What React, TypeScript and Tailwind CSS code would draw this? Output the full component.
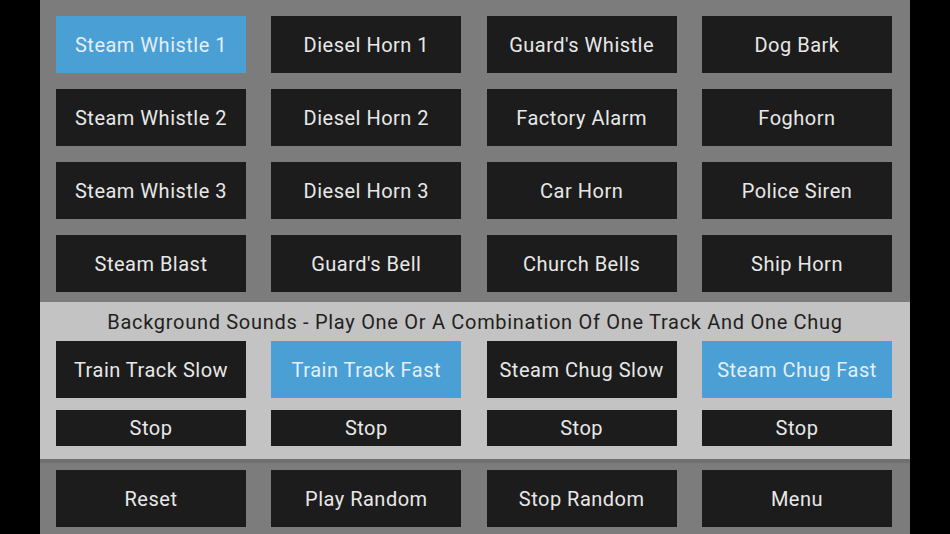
const effects = [
  ["Steam Whistle 1", "Diesel Horn 1", "Guard's Whistle", "Dog Bark"],
  ["Steam Whistle 2", "Diesel Horn 2", "Factory Alarm", "Foghorn"],
  ["Steam Whistle 3", "Diesel Horn 3", "Car Horn", "Police Siren"],
  ["Steam Blast", "Guard's Bell", "Church Bells", "Ship Horn"],
];

const background = [
  { label: "Train Track Slow", on: false },
  { label: "Train Track Fast", on: true },
  { label: "Steam Chug Slow", on: false },
  { label: "Steam Chug Fast", on: true },
];

const controls = ["Reset", "Play Random", "Stop Random", "Menu"];

function Btn({ label, on = false, h = "h-[57px]" }: { label: string; on?: boolean; h?: string }) {
  return (
    <button
      className={`${h} w-[190px] flex items-center justify-center text-[20px] tracking-[0.5px] ${
        on ? "bg-[#4a9fd4] text-[#e4eef5]" : "bg-[#1c1c1c] text-[#e8e8e8]"
      }`}
    >
      {label}
    </button>
  );
}

export default function App() {
  return (
    <div
      className="w-[950px] h-[534px] bg-black flex justify-center overflow-hidden"
      style={{ fontFamily: "Roboto, 'Noto Sans', sans-serif" }}
    >
      <div className="w-[870px] h-full bg-[#7c7c7c] flex flex-col">
        {/* Sound effects */}
        <div className="grid grid-cols-[repeat(4,190px)] gap-x-[25.33px] gap-y-[16px] pl-[16px] pt-[16px]">
          {effects.flat().map((label, i) => (
            <Btn key={label} label={label} on={i === 0} />
          ))}
        </div>

        {/* Background sounds */}
        <div className="mt-[10px] h-[157px] bg-[#c3c3c3] pl-[16px] flex flex-col">
          <div className="h-[39px] flex items-center justify-center pr-[16px] text-[20px] tracking-[0.7px] text-[#231f20]">
            Background Sounds - Play One Or A Combination Of One Track And One Chug
          </div>
          <div className="grid grid-cols-[repeat(4,190px)] gap-x-[25.33px]">
            {background.map((b) => (
              <Btn key={b.label} label={b.label} on={b.on} />
            ))}
          </div>
          <div className="grid grid-cols-[repeat(4,190px)] gap-x-[25.33px] mt-[12px]">
            {background.map((b) => (
              <Btn key={b.label} label="Stop" h="h-[36px]" />
            ))}
          </div>
        </div>

        <div className="h-[4px] bg-[#707070]" />

        {/* Controls */}
        <div className="grid grid-cols-[repeat(4,190px)] gap-x-[25.33px] pl-[16px] pt-[7px]">
          {controls.map((label) => (
            <Btn key={label} label={label} />
          ))}
        </div>
      </div>
    </div>
  );
}
